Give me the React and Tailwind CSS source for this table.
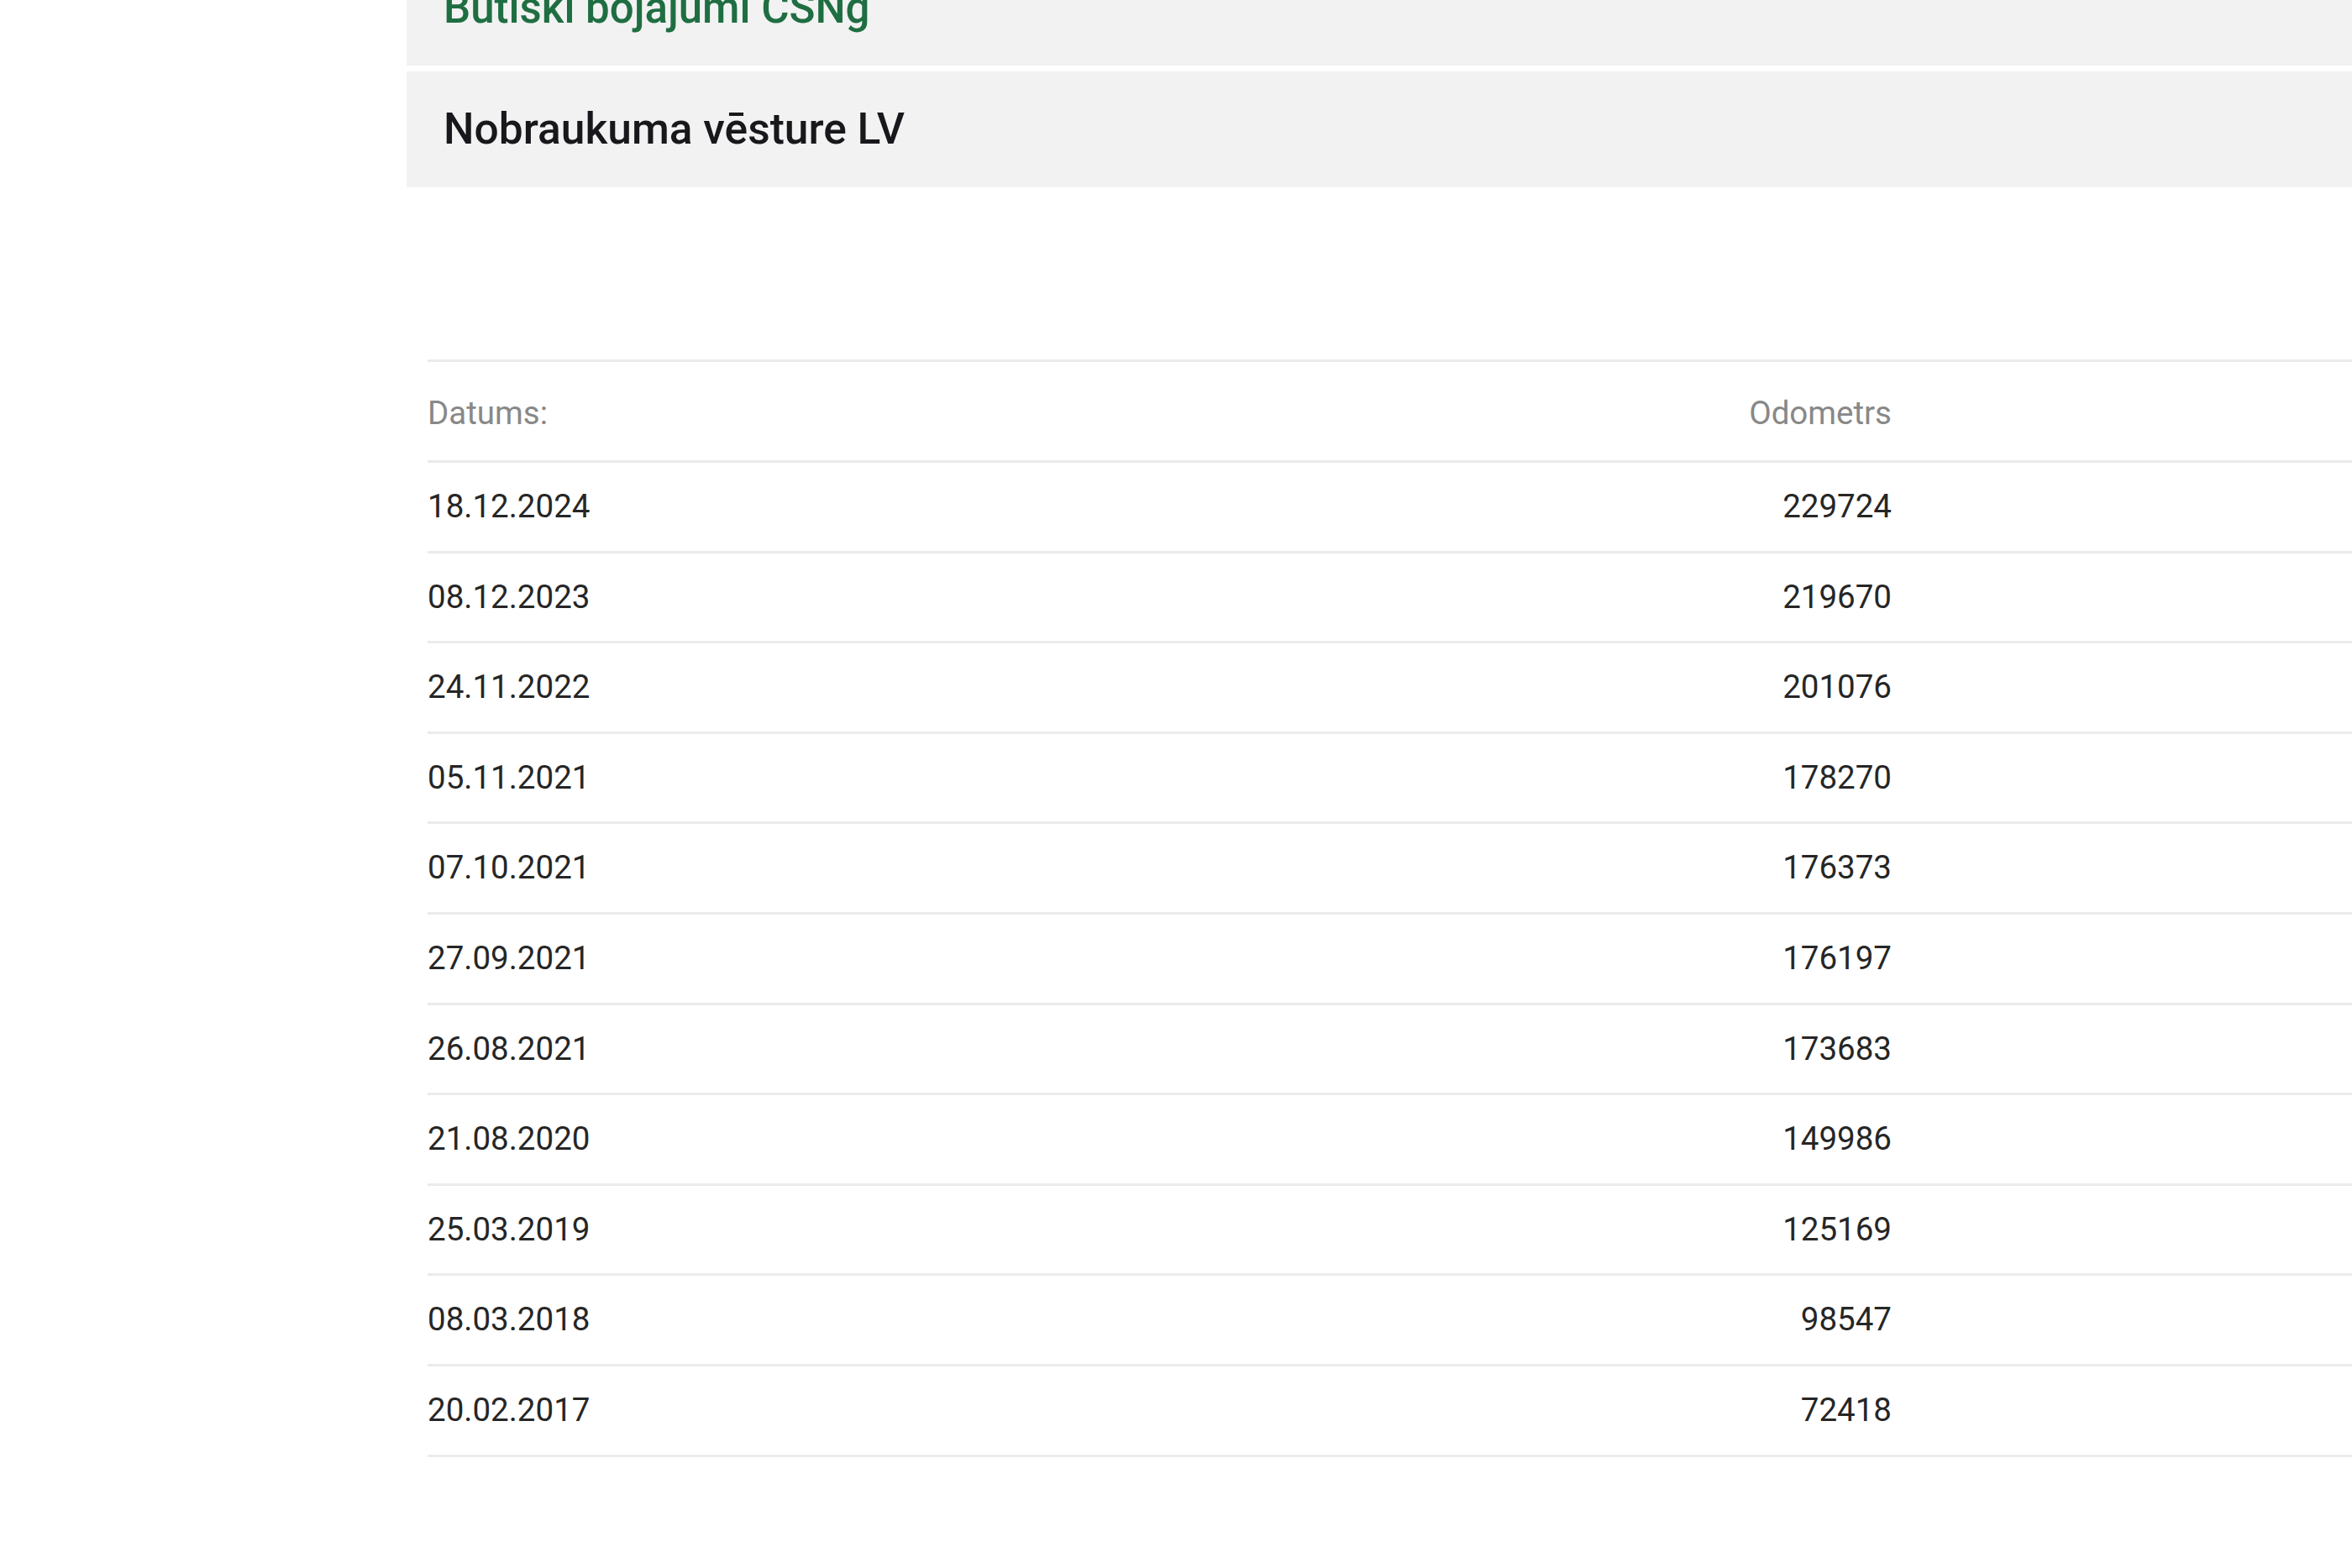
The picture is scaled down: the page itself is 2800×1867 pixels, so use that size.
import React from "react";

const rows = [
  ["18.12.2024", "229724"],
  ["08.12.2023", "219670"],
  ["24.11.2022", "201076"],
  ["05.11.2021", "178270"],
  ["07.10.2021", "176373"],
  ["27.09.2021", "176197"],
  ["26.08.2021", "173683"],
  ["21.08.2020", "149986"],
  ["25.03.2019", "125169"],
  ["08.03.2018", "98547"],
  ["20.02.2017", "72418"],
];

export default function App() {
  return (
    <div
      className="w-[2800px] h-[1867px] overflow-hidden bg-white"
      style={{ fontFamily: "Roboto, 'Liberation Sans', sans-serif" }}
    >
      <div className="pl-[484px]">
        <div className="-mt-[60px] h-[138px] bg-[#f2f2f2] flex items-center pl-[44px]">
          <span className="text-[51px] font-medium text-[#1f6e42] leading-none">
            Būtiski bojājumi CSNg
          </span>
        </div>
        <div className="mt-[7px] h-[138px] bg-[#f2f2f2] flex items-center pl-[44px]">
          <span className="text-[51.5px] font-medium text-[#18181c] leading-none">
            Nobraukuma vēsture LV
          </span>
        </div>

        <div className="ml-[25px] mt-[205px] border-t-[3px] border-[#ebebeb]">
          <div className="h-[120px] border-b-[3px] border-[#ebebeb] flex items-center justify-between pr-[548px] pt-[6px] text-[38.5px] text-[#888888] leading-none">
            <span>Datums:</span>
            <span>Odometrs</span>
          </div>
          {rows.map(([d, o]) => (
            <div
              key={d}
              className="h-[107.6px] border-b-[3px] border-[#ebebeb] flex items-center justify-between pr-[548px] text-[38.5px] text-[#262626] leading-none"
            >
              <span>{d}</span>
              <span>{o}</span>
            </div>
          ))}
        </div>
      </div>
    </div>
  );
}
